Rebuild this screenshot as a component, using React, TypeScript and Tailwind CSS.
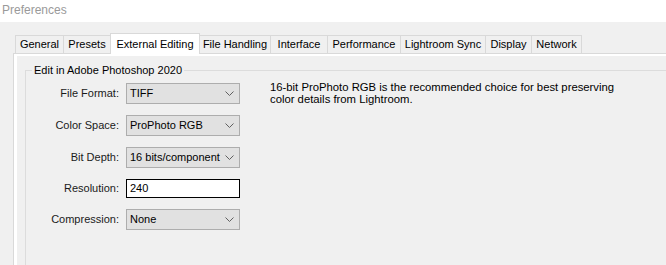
import React from 'react';

const tabs = [
  { label: 'General', w: 'w-[48px]' },
  { label: 'Presets', w: 'w-[47px]' },
  { label: 'External Editing', w: 'w-[90px]', active: true },
  { label: 'File Handling', w: 'w-[70px]' },
  { label: 'Interface', w: 'w-[57px]' },
  { label: 'Performance', w: 'w-[73px]' },
  { label: 'Lightroom Sync', w: 'w-[85px]' },
  { label: 'Display', w: 'w-[46px]' },
  { label: 'Network', w: 'w-[51px]' },
];

function Chevron() {
  return (
    <svg width="9" height="5" viewBox="0 0 9 5" className="shrink-0">
      <path d="M0.5 0.5 L4.5 4.5 L8.5 0.5" fill="none" stroke="#606060" strokeWidth="1" />
    </svg>
  );
}

function Select({ value }: { value: string }) {
  return (
    <div className="flex h-[21px] w-[114px] items-center justify-between border border-[#adadad] bg-[#e1e1e1] pl-[3px] pr-[5px] text-black">
      <span>{value}</span>
      <Chevron />
    </div>
  );
}

function Label({ children }: { children: React.ReactNode }) {
  return <div className="flex items-center justify-end text-[#1a1a1a]">{children}</div>;
}

export default function App() {
  return (
    <div className="flex h-[265px] w-[666px] flex-col overflow-hidden bg-[#f0f0f0] font-['Segoe_UI','Liberation_Sans',sans-serif] text-[11px]">
      {/* Title bar */}
      <div className="h-[22px] shrink-0 bg-white pl-[2px] pt-[1px] text-[12px] text-[#9a9a9a]">Preferences</div>

      {/* Tab strip */}
      <div className="flex pl-[15px] pt-[13px]">
        {tabs.map((t, i) => (
          <div
            key={t.label}
            className={
              t.active
                ? `${t.w} relative z-10 -mb-px -mt-[2px] flex h-[21px] items-start justify-center border-x border-t border-[#d9d9d9] bg-white pt-[2px] text-black`
                : `${t.w} flex h-[18px] items-center justify-center border-t border-[#d9d9d9] text-black ${tabs[i - 1]?.active ? '' : 'border-l'} ${i === tabs.length - 1 ? 'border-r' : ''}`
            }
          >
            {t.label}
          </div>
        ))}
      </div>

      {/* Tab panel */}
      <div className="ml-[13px] flex flex-1 flex-col border-l border-t border-[#d9d9d9] bg-white pl-[3px] pt-[2px]">
        <div className="flex-1 bg-[#f0f0f0] pl-[8px] pt-[8px]">
          <fieldset className="h-full border-l border-t border-[#dcdcdc]">
            <legend className="ml-[6px] px-[2px] leading-[12px] text-black">Edit in Adobe Photoshop 2020</legend>
            <div className="flex pt-[7px]">
              <div className="grid grid-cols-[93px_114px] gap-x-[7px] gap-y-[11px]">
                <Label>File Format:</Label>
                <Select value="TIFF" />
                <Label>Color Space:</Label>
                <Select value="ProPhoto RGB" />
                <Label>Bit Depth:</Label>
                <Select value="16 bits/component" />
                <Label>Resolution:</Label>
                <div className="flex h-[19px] w-[114px] items-center border border-black bg-white pl-[3px] text-black">240</div>
                <Label>Compression:</Label>
                <Select value="None" />
              </div>
              <p className="-mt-[2px] ml-[30px] text-[11.3px] leading-[12px] text-black">
                16-bit ProPhoto RGB is the recommended choice for best preserving
                <br />
                color details from Lightroom.
              </p>
            </div>
          </fieldset>
        </div>
      </div>
    </div>
  );
}
